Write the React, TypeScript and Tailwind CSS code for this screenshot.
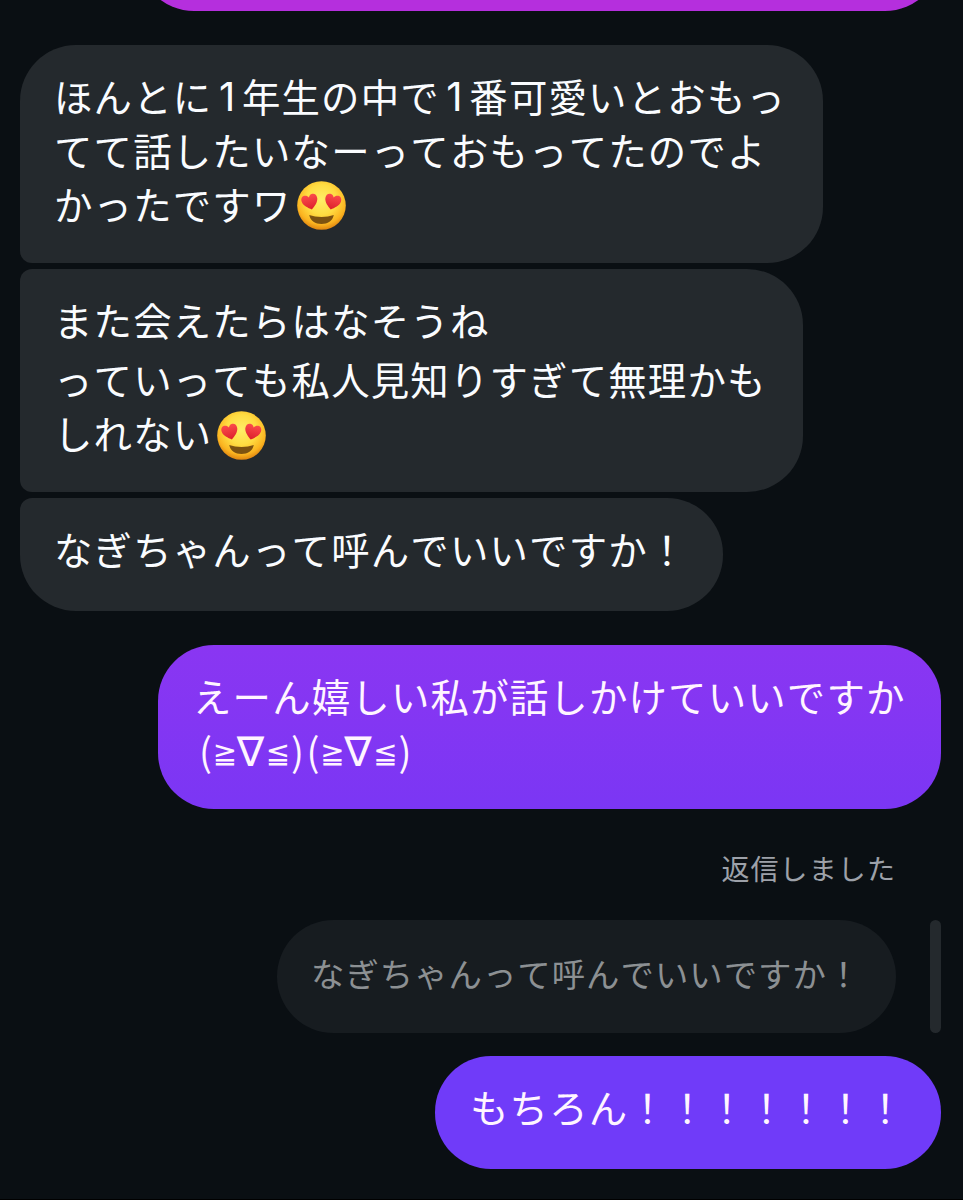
import type { ReactNode } from "react";

// -----------------------------
// Heart eyes emoji
// -----------------------------
function HeartEyes() {
  const heart =
    "M0 7.8C-3.4 5.2 -7.6 2 -8 -2.2C-8.3 -5.4 -6.4 -7.4 -4.1 -7.4C-2.2 -7.4 -0.8 -6.4 0 -4.6C0.8 -6.4 2.2 -7.4 4.1 -7.4C6.4 -7.4 8.3 -5.4 8 -2.2C7.6 2 3.4 5.2 0 7.8Z";

  return (
    <svg
      viewBox="0 0 49 49"
      className="ml-[5px] mt-[6px] size-[49px] shrink-0"
      role="img"
      aria-label="😍"
    >
      <defs>
        <radialGradient id="face" cx="0.5" cy="0.38" r="0.62">
          <stop offset="0" stopColor="#ffee68" />
          <stop offset="0.5" stopColor="#ffdc42" />
          <stop offset="0.82" stopColor="#fbb420" />
          <stop offset="1" stopColor="#df8410" />
        </radialGradient>
        <linearGradient id="heart" x1="0" y1="0" x2="0" y2="1">
          <stop offset="0" stopColor="#fb4b4b" />
          <stop offset="1" stopColor="#dc1f2c" />
        </linearGradient>
      </defs>
      <circle cx="24.5" cy="24.5" r="24.3" fill="url(#face)" />
      <path d={heart} fill="url(#heart)" transform="translate(13 21) rotate(-14)" />
      <path d={heart} fill="url(#heart)" transform="translate(35.6 21) rotate(14)" />
      <path
        d="M12.2 34C19.5 36.6 29.5 36.6 36.8 34C35.6 40 30.6 43 24.5 43C18.4 43 13.4 40 12.2 34Z"
        fill="#7d5210"
      />
    </svg>
  );
}

// Latin digit inside Japanese text
function One() {
  return (
    <span className="mt-[5px] inline-block w-[29.5px] pl-[6.5px] font-['Inter'] text-[40px] leading-none tracking-normal">
      1
    </span>
  );
}

function Kaomoji() {
  return (
    <span className="flex h-[54px] w-[107.5px] shrink-0 items-center tracking-normal">
      <span className="w-[13px]">(</span>
      <span className="mt-[9px] w-[26px] text-center font-['DejaVu_Sans'] text-[29px]">≧</span>
      <span className="-ml-[2px] mt-[7px] w-[29px] text-center font-['DejaVu_Sans'] text-[41px]">∇</span>
      <span className="mt-[9px] w-[26px] text-center font-['DejaVu_Sans'] text-[29px]">≦</span>
      <span>)</span>
    </span>
  );
}

function Line({ children, className = "" }: { children: ReactNode; className?: string }) {
  return (
    <div className={`flex h-[53.8px] items-center whitespace-nowrap ${className}`}>
      {children}
    </div>
  );
}

function Received({ children, className }: { children: ReactNode; className: string }) {
  return <div className={`self-start bg-[#24292d] pl-[34px] pt-[23px] ${className}`}>{children}</div>;
}

function Sent({ children, className }: { children: ReactNode; className: string }) {
  return (
    <div className={`mr-[22px] shrink-0 self-end rounded-[56px] pl-[35px] pt-[23px] ${className}`}>
      {children}
    </div>
  );
}

export default function App() {
  return (
    <main className="flex h-[1200px] w-[963px] flex-col overflow-hidden border-b border-black bg-[#0a0f13] pl-[20px] font-['Noto_Sans_CJK_JP',sans-serif] text-[38.4px] leading-[54px] tracking-[1.2px] text-[#fafcff] [font-kerning:none]">
      <Sent className="-mt-[101px] h-[112px] w-[803px] bg-[#b52fdd]">{null}</Sent>

      {/* Received messages */}
      <section className="mt-[34px] flex flex-col gap-[6px]">
        <Received className="h-[218px] w-[803px] rounded-[56px] rounded-bl-[12px]">
          <Line>
            ほんとに
            <One />
            年生の中で
            <One />
            番可愛いとおもっ
          </Line>
          <Line>てて話したいなーっておもってたのでよ</Line>
          <Line>
            かったですワ
            <HeartEyes />
          </Line>
        </Received>
        <Received className="h-[223px] w-[783px] rounded-l-[12px] rounded-r-[56px]">
          <Line>また会えたらはなそうね</Line>
          <Line className="mt-[5.5px]">っていっても私人見知りすぎて無理かも</Line>
          <Line>
            しれない
            <HeartEyes />
          </Line>
        </Received>
        <Received className="h-[113px] w-[703px] rounded-[56px] rounded-tl-[12px]">
          <Line>なぎちゃんって呼んでいいですか！</Line>
        </Received>
      </section>

      {/* Sent message */}
      <Sent className="mt-[34px] h-[164px] w-[783px] bg-linear-to-b from-[#8a36f2] to-[#7b36f4] text-[#fff5ff]">
        <Line>えーん嬉しい私が話しかけていいですか</Line>
        <Line className="pl-[6px]">
          <Kaomoji />
          <Kaomoji />
        </Line>
      </Sent>

      {/* Reply */}
      <p className="mr-[67px] mt-[38px] h-[42px] self-end text-[28px] leading-[42px] tracking-[1.1px] text-[#9da1a9]">
        返信しました
      </p>
      <div className="mr-[22px] mt-[31px] flex h-[113px] shrink-0 gap-[34px] self-end">
        <div className="w-[619px] rounded-full bg-[#171c20] pl-[34px] pt-[26px] text-[33.4px] tracking-[1px] text-[#8c9093]">
          <Line>なぎちゃんって呼んでいいですか！</Line>
        </div>
        <div className="w-[11px] rounded-full bg-[#24292d]" />
      </div>
      <Sent className="mt-[23px] h-[113px] w-[506px] bg-[#703bf9] text-[#fff5ff]">
        <Line>もちろん！！！！！！！</Line>
      </Sent>
    </main>
  );
}
